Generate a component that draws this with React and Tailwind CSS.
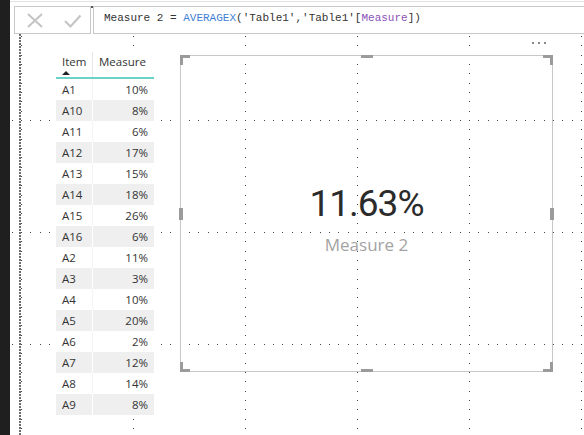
import React from "react";

const ROWS = [
  ["A1", "10%"],
  ["A10", "8%"],
  ["A11", "6%"],
  ["A12", "17%"],
  ["A13", "15%"],
  ["A14", "18%"],
  ["A15", "26%"],
  ["A16", "6%"],
  ["A2", "11%"],
  ["A3", "3%"],
  ["A4", "10%"],
  ["A5", "20%"],
  ["A6", "2%"],
  ["A7", "12%"],
  ["A8", "14%"],
  ["A9", "8%"],
];

const STEPS = [0, 9, 19, 28, 37, 47, 56, 65, 75, 84, 93, 103];

function DotGrid() {
  return (
    <svg className="pointer-events-none absolute inset-0 h-full w-full" aria-hidden="true">
      <defs>
        <pattern id="grid" x="11" y="-26" width="112" height="112" patternUnits="userSpaceOnUse">
          {STEPS.map((s) => (
            <rect key={"h" + s} x={s} y="0" width="1" height="1" fill="#444" />
          ))}
          {STEPS.slice(1).map((s) => (
            <rect key={"v" + s} x="0" y={s} width="1" height="1" fill="#444" />
          ))}
        </pattern>
      </defs>
      <rect width="100%" height="100%" fill="url(#grid)" />
    </svg>
  );
}

function Handles() {
  const c = "absolute bg-[#9b9b9b]";
  return (
    <>
      {/* corners */}
      <div className={`${c} -left-px -top-px h-[3px] w-[10px]`} />
      <div className={`${c} -left-px -top-px h-[10px] w-[3px]`} />
      <div className={`${c} -right-px -top-px h-[3px] w-[10px]`} />
      <div className={`${c} -right-px -top-px h-[10px] w-[3px]`} />
      <div className={`${c} -left-px -bottom-px h-[3px] w-[10px]`} />
      <div className={`${c} -left-px -bottom-px h-[10px] w-[3px]`} />
      <div className={`${c} -right-px -bottom-px h-[3px] w-[10px]`} />
      <div className={`${c} -right-px -bottom-px h-[10px] w-[3px]`} />
      {/* middles */}
      <div className={`${c} left-1/2 -top-px h-[3px] w-[12px] -translate-x-1/2`} />
      <div className={`${c} left-1/2 -bottom-px h-[3px] w-[12px] -translate-x-1/2`} />
      <div className={`${c} -left-[2px] top-1/2 h-[12px] w-[4px] -translate-y-1/2`} />
      <div className={`${c} -right-[2px] top-1/2 h-[12px] w-[4px] -translate-y-1/2`} />
    </>
  );
}

export default function App() {
  return (
    <div
      className="flex h-[435px] w-[584px] overflow-hidden bg-white text-[#333]"
      style={{ fontFamily: '"Open Sans", "Noto Sans", sans-serif' }}
    >
      <div className="w-[10px] shrink-0 bg-[#1f1f1f]" />

      <div className="flex min-w-0 flex-1 flex-col">
        <div className="mt-px h-px bg-[#e2e2e2]" />

        {/* formula bar */}
        <div className="mt-[4px] flex h-[28px] shrink-0 pl-[4px]">
          <div className="w-[77px] shrink-0 border border-[#c8c8c8]">
            <svg width="75" height="26" viewBox="0 0 75 26" fill="none" stroke="#c4c4c4" strokeWidth="2">
              <path d="M13 7 L27 20 M27 7 L13 20" />
              <path d="M50 14 L55.5 19.5 L65.5 8.5" />
            </svg>
          </div>
          <div className="relative w-[2px] shrink-0">
            <div className="absolute left-0 top-0 h-[2px] w-[2px] bg-[#555]" />
          </div>
          <div
            className="flex-1 whitespace-nowrap border-y border-l border-[#c8c8c8] pl-[10px] pt-[4px] text-[11px] leading-[14px] text-[#333]"
            style={{ fontFamily: '"Liberation Mono", "DejaVu Sans Mono", monospace' }}
          >
            Measure 2 = <span className="text-[#3f7fd6]">AVERAGEX</span>('Table1','Table1'[
            <span className="text-[#8a52b8]">Measure</span>])
          </div>
        </div>

        {/* report canvas */}
        <div className="relative flex min-h-0 flex-1 items-start">
          <DotGrid />
          <div className="relative ml-[9px] h-full w-[2px] shrink-0 bg-[repeating-linear-gradient(to_bottom,#6e6e6e_0_2px,transparent_2px_3px)]" />

          {/* table visual */}
          <div className="relative ml-[35px] mt-[18px] w-[98px] shrink-0 text-[11.5px]">
            <div className="flex h-[27px] border-b-2 border-[#6ad3c6] bg-white">
              <div className="w-[37px] border-r border-[#e8e8e8] pl-[6px] pt-[3px]">
                <div className="leading-[14px]">Item</div>
                <svg width="8" height="4" viewBox="0 0 8 4" className="mt-[2px] block">
                  <path d="M0 4 L4 0 L8 4 Z" fill="#222" />
                </svg>
              </div>
              <div className="flex-1 pl-[6px] pt-[3px] leading-[14px]">Measure</div>
            </div>
            {ROWS.map(([item, val], i) => (
              <div key={item} className={`flex h-[21px] items-center ${i % 2 ? "bg-[#efefef]" : "bg-white"}`}>
                <div className={`flex h-full w-[37px] items-center border-r pl-[6px] ${i % 2 ? "border-white" : "border-[#f4f4f4]"}`}>
                  {item}
                </div>
                <div className="flex-1 pr-[6px] text-right">{val}</div>
              </div>
            ))}
          </div>

          {/* card visual */}
          <div className="relative ml-[26px] mt-[21px] h-[317px] w-[373px] shrink-0 border border-[#c8c8c8]">
            <div className="absolute -top-[14px] right-[6px] flex gap-[4px]">
              <div className="h-[2px] w-[2px] bg-[#8a8a8a]" />
              <div className="h-[2px] w-[2px] bg-[#8a8a8a]" />
              <div className="h-[2px] w-[2px] bg-[#8a8a8a]" />
            </div>
            <Handles />
            <div className="flex flex-col items-center pt-[129px]">
              <div
                className="text-[37px] leading-none tracking-[-1px] text-[#2b2b2b]"
                style={{ fontFamily: "Roboto, sans-serif" }}
              >
                11.63%
              </div>
              <div className="mt-[14px] text-[17px] leading-none text-[#a3a3a3]">Measure 2</div>
            </div>
          </div>
        </div>
      </div>
    </div>
  );
}
